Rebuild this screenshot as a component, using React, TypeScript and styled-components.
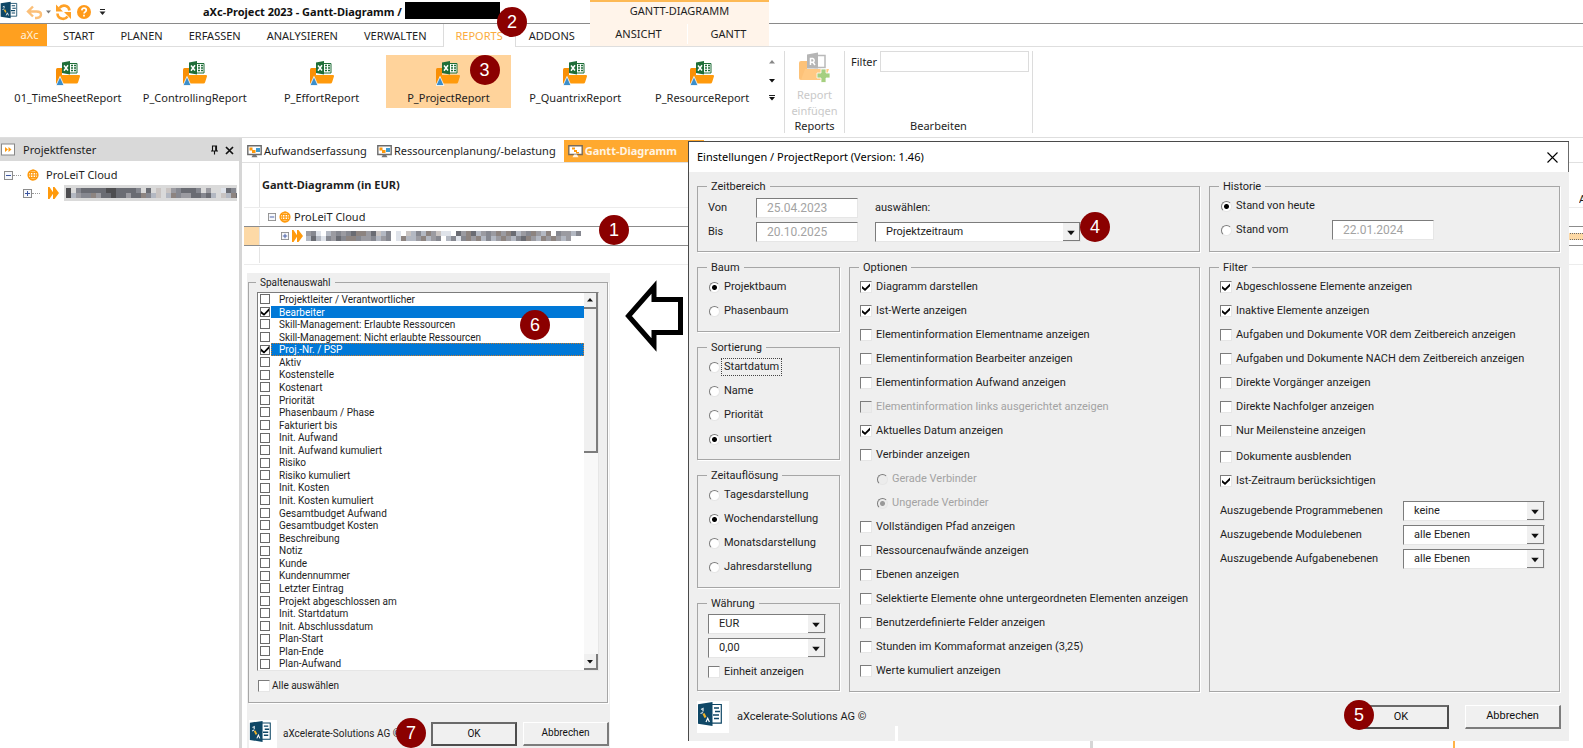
import React from "react";
import styled, { createGlobalStyle, css } from "styled-components";

const APP_FONT = `"Noto Sans", "Open Sans", sans-serif`;
const DIALOG_FONT = `Roboto, "Liberation Sans", sans-serif`;
const ORANGE = "#ff9a0c";

const GlobalStyle = createGlobalStyle`
  *, *::before, *::after { box-sizing: border-box; }
  body { margin: 0; background: #fff; color: #1e1e1e; font: 11px/16px ${APP_FONT}; overflow: hidden; }
  button, input, select { font: inherit; color: inherit; margin: 0; }
  svg { display: block; flex: none; }
`;

/* ---------- icons ---------- */

const Logo = ({ size }: { size: number }) => (
  <svg width={size} height={size} viewBox="0 0 32 32" aria-hidden="true">
    <rect width="32" height="32" fill="#fff" />
    <path d="M14 3.500h10.300v18.600H14" fill="#fff" stroke="#0f4766" strokeWidth="1.200" />
    <path d="M17 7h5M18 10.500h5M16 14h6M17 17.500h5" stroke="#0f4766" strokeWidth="1.600" />
    <path d="M1 3.200 15.500 1v24L1 22.800z" fill="#0f4766" />
    <path d="M4 8.500l2-1v3M3.500 12.500l2.500-1" stroke="#dbe5ea" strokeWidth="1.300" fill="none" />
    <path d="M6.500 12.500l2 4" stroke="#f0b429" strokeWidth="2.200" />
    <path d="M9 21l1.700-3.800 1.700 3.800" stroke="#fff" strokeWidth="1.200" fill="none" />
  </svg>
);

const ReportIcon = () => (
  <svg width="24" height="25" viewBox="0 0 24 25" aria-hidden="true">
    <path d="M0 8.500q0-1.500 1.500-1.500H6v8l-2.500 8H1.500Q0 23 0 21.500z" fill="#f98f06" />
    <path d="M13 2.500h8v9.500h-8z" fill="#fff" stroke="#1f6e38" />
    <path d="M15 4.500h2M18 4.500h2M15 7h2M18 7h2M15 9.500h2M18 9.500h2" stroke="#1f6e38" strokeWidth="1.300" />
    <path d="M6 1.500 14 0v13.500L6 12z" fill="#1f6e38" />
    <path d="M8 4.500l4 5M12 4.300l-4 5.400" stroke="#fff" strokeWidth="1.500" />
    <path d="M3 15.500q.4-1.500 2-1.500h18q1.300 0 1 1.200l-1.800 5.800q-.4 1.500-1.800 1.500H4z" fill="#ff9a0c" />
    <path d="M4 15.500l4 9H0z" fill="#3b8ecb" stroke="#fff" strokeWidth=".8" />
  </svg>
);

const InsertReportIcon = () => (
  <svg width="32" height="31" viewBox="0 0 32 31" aria-hidden="true">
    <path d="M1 11q0-2 2-2h6v9L4 28H3q-2 0-2-2z" fill="#fdc278" />
    <path d="M17 3.500h10v12H17z" fill="#fff" stroke="#b9b9b9" strokeWidth="1.500" />
    <path d="M9 2.500 20 .5v16H9z" fill="#b5b5b5" />
    <path d="M12.500 13V6.500h2.300a2 2 0 0 1 0 3.800h-2.300M15 10.500l2 2.500" stroke="#fff" strokeWidth="1.500" fill="none" />
    <path d="M7 17h24l-3 8q-1 3-3 3H3z" fill="#ffc983" />
    <path d="M23 17h5v4h4v5h-4v4.500h-5V26h-4v-5h4z" fill="#a5cf7f" stroke="#fff" strokeWidth=".8" />
  </svg>
);

const GlobeIcon = () => (
  <svg width="12" height="12" viewBox="0 0 12 12" aria-hidden="true">
    <circle cx="6" cy="6" r="4.800" fill="#fff" stroke={ORANGE} strokeWidth="1.600" />
    <path d="M6 1v10M1 6h10M2 3.500h8M2 8.500h8" stroke={ORANGE} strokeWidth="1.200" />
    <ellipse cx="6" cy="6" rx="2.800" ry="5" stroke={ORANGE} strokeWidth="1.100" fill="none" />
  </svg>
);

const ArrowsIcon = () => (
  <svg width="11" height="12" viewBox="0 0 11 12" aria-hidden="true">
    <path d="M0 0h1.500l4 6-4 6H0zM5 0h1.500L11 6l-4.500 6H5z" fill={ORANGE} />
  </svg>
);

const ExpandBox = ({ open, size = 9 }: { open?: boolean; size?: number }) => (
  <svg width={size} height={size} viewBox="0 0 9 9" aria-hidden="true">
    <rect x=".5" y=".5" width="8" height="8" fill="#f6f8fc" stroke="#8c8c8c" />
    <path d={open ? "M2 4.500h5" : "M2 4.500h5M4.500 2v5"} stroke="#3b55a0" />
  </svg>
);

const ScreenIcon = ({ blue, light }: { blue?: boolean; light?: boolean }) => (
  <svg width="15" height="14" viewBox="0 0 15 14" aria-hidden="true">
    <path d="M.8 1.800h13.400v8.700H.8z" fill="#fff" stroke={light ? "#7b6a55" : "#6b6b6b"} strokeWidth="1.400" />
    <path d="M6 10.500h3l1.500 2.800h-6z" fill={light ? "#fff3e0" : "#777"} />
    <path d={light ? "M4 3.500h3v2H4zM6 6h3v2H6zM8 8h3v1.500H8z" : "M2.500 3.500h3V6h3v3H5V6.500H2.500z"} fill={ORANGE} />
    {blue && <path d="M9 4h4v4H9z" fill="#3e9bd0" />}
  </svg>
);

const QuickIcons = () => (
  <svg width="108" height="20" viewBox="2 0 108 20" aria-hidden="true">
    <path d="M13 4.500 8 9.500l5 5M8.500 9.500h8q4.500 0 4.500 3t-4.500 3.500h-1.500" stroke="#fbbf78" strokeWidth="2.400" fill="none" />
    <path d="M26 8.500h5l-2.500 3z" fill="#777" />
    <path d="M49.500 8.500a5.500 5.500 0 0 0-10-2.500M37.500 11.500a5.500 5.500 0 0 0 10 3" stroke="#ffa126" strokeWidth="2.600" fill="none" />
    <path d="M36 2.500v7h7zM51 17v-7h-7z" fill="#ffa126" />
    <circle cx="64" cy="10" r="7" fill="#ff9a1a" />
    <path d="M61.800 8.300q.2-2.200 2.300-2.200t2.200 2q0 1.200-1.200 1.800-1 .5-1 1.600M64 12.800v1.600" stroke="#fff" strokeWidth="1.700" fill="none" />
    <path d="M80 7.500h5" stroke="#222" />
    <path d="M79.500 9.500h6l-3 3.500z" fill="#222" />
  </svg>
);

const Triangle = ({ up, bar, dim, large }: { up?: boolean; bar?: boolean; dim?: boolean; large?: boolean }) => (
  <svg width={large ? 10 : 8} height={large ? 10 : 8} viewBox="0 0 8 8" aria-hidden="true">
    {bar && <path d="M1 1.500h6" stroke="#222" />}
    <path d={up ? "M1 5.500h6L4 2z" : "M1 3h6L4 6.500z"} fill={dim ? "#888" : "#111"} />
  </svg>
);

const SHADES = ["#4d4d50", "#6a6c73", "#868890", "#9b9ba1", "#8d8480", "#b3b8c2", "#c9c4c2", "#dfe3ea"];

/* A censored name: two rows of grey blocks, one digit per block. */
const Mosaic = ({ rows }: { rows: string[] }) => (
  <svg width={rows[0].length * 5} height="10" viewBox={`0 0 ${rows[0].length * 5} 10`} aria-hidden="true">
    {rows.map((row, y) =>
      row.split("").map((c, x) =>
        c === " " ? null : <rect key={`${y}-${x}`} x={x * 5} y={y * 5} width="5" height="5" fill={SHADES[Number(c)]} />,
      ),
    )}
  </svg>
);

/* ---------- numbered markers ---------- */

const Marker = styled.span<{ $x: number; $y: number }>`
  position: absolute;
  left: ${(p) => p.$x}px;
  top: ${(p) => p.$y}px;
  z-index: 5;
  width: 30px;
  height: 30px;
  border-radius: 50%;
  background: #8b0000;
  color: #fff;
  font: 18px/30px "Liberation Sans", Arial, sans-serif;
  text-align: center;
`;

/* ---------- application frame ---------- */

const Shell = styled.div`
  position: relative;
  display: flex;
  flex-direction: column;
  min-height: 100vh;
`;

const Header = styled.header`
  display: flex;
  height: 46px;
`;

const HeadMain = styled.div`
  position: relative;
  flex: 0 0 590px;
`;

const TitleBar = styled.div`
  display: flex;
  align-items: center;
  height: 24px;
  border-bottom: 1px solid #8a8a8a;
`;

const Title = styled.h1`
  margin: 0 0 0 73px;
  font-size: 11px;
  line-height: 16px;
  color: #111;
  white-space: nowrap;
`;

const Redacted = styled.span`
  width: 95px;
  height: 17px;
  margin-left: 3px;
  margin-bottom: 2px;
  background: #000;
`;

const Tabs = styled.nav`
  display: flex;
  height: 23px;
`;

const tabLook = css`
  border: 0;
  background: none;
  padding: 0 13px;
  line-height: 20px;
  white-space: nowrap;
`;

const Tab = styled.button<{ $active?: boolean }>`
  ${tabLook}
  ${(p) =>
    p.$active &&
    css`
      margin-left: 3px;
      padding: 0 12px;
      color: #fbab3c;
      background: #fff;
      border: solid #dcdcdc;
      border-width: 0 1px;
      z-index: 1;
    `}
`;

const FileTab = styled.button`
  ${tabLook}
  width: 47px;
  height: 22px;
  margin-right: 3px;
  padding: 0 0 0 12px;
  background: #ffa01f;
  color: #fff1dc;
`;

const Context = styled.div`
  flex: 0 0 179px;
  border-top: 2px solid #fdb955;
  background: #fff4ea;
  text-align: center;
`;

const ContextTitle = styled.div`
  height: 22px;
  line-height: 18px;
`;

const ContextTabs = styled.div`
  display: grid;
  grid-template-columns: 97px 1fr;
  & > button + button { border-left: 1px solid #fff; }
`;

const HeadRest = styled.div`
  flex: 1;
  height: 24px;
  border-bottom: 1px solid #8a8a8a;
`;

const Ribbon = styled.section`
  display: flex;
  height: 92px;
  border: solid #dedede;
  border-width: 1px 0;
`;

const Gallery = styled.div`
  flex: 0 0 765px;
  display: grid;
  grid-template-columns: repeat(6, 1fr);
  column-gap: 1px;
  align-items: start;
  padding: 8px 0 0 5px;
`;

const GalleryItem = styled.button<{ $active?: boolean }>`
  position: relative;
  display: flex;
  flex-direction: column;
  align-items: center;
  gap: 4px;
  height: 53px;
  padding: 6px 0 0;
  border: 0;
  background: ${(p) => (p.$active ? "#ffd39b" : "none")};
`;

const GalleryScroll = styled.div`
  flex: 0 0 19px;
  display: flex;
  flex-direction: column;
  gap: 10px;
  padding: 11px 0 0 3px;
`;

const Group = styled.section<{ $width: number }>`
  flex: 0 0 ${(p) => p.$width}px;
  min-width: 0;
  display: flex;
  flex-direction: column;
  align-items: center;
  margin: 4px 0 4px;
  border-left: 1px solid #dcdcdc;
  &:last-child { border-right: 1px solid #dcdcdc; }
`;

const GroupLabel = styled.div`
  margin-top: auto;
  line-height: 14px;
`;

const InsertButton = styled.button`
  display: flex;
  flex-direction: column;
  align-items: center;
  height: 66px;
  padding: 0;
  border: 0;
  overflow: hidden;
  background: none;
  color: #c9c9c9;
  line-height: 16px;
  & > svg { margin: 1px 0 4px; }
`;

const FilterField = styled.label`
  display: flex;
  align-self: stretch;
  align-items: center;
  gap: 3px;
  padding: 0 3px 0 6px;
  & > input {
    flex: 1;
    min-width: 0;
    height: 21px;
    border: 1px solid #dcdcdc;
  }
`;

const Workspace = styled.div`
  flex: 1;
  display: flex;
`;

const Sidebar = styled.aside`
  flex: 0 0 239px;
  overflow: hidden;
`;

const SidebarHead = styled.div`
  display: flex;
  align-items: center;
  height: 23px;
  padding: 1px 5px 0 1px;
  background: #d9d9d9;
  & > span { flex: 1; padding-left: 7px; }
`;

const HeadIcon = styled.button`
  padding: 0;
  margin-left: 6px;
  border: 0;
  background: none;
`;

const Tree = styled.div`
  padding: 5px 2px 0 4px;
`;

const TreeRow = styled.div<{ $indent?: number }>`
  display: flex;
  align-items: center;
  height: 18px;
  padding-left: ${(p) => p.$indent ?? 0}px;
`;

const Branch = styled.span<{ $gap: number }>`
  width: 8px;
  margin-right: ${(p) => p.$gap}px;
  border-top: 1px dotted #999;
`;

const TreeLabel = styled.span`
  margin-left: 7px;
`;

const CensoredLabel = styled.span`
  flex: 1;
  margin-left: 5px;
  padding: 3px 0 3px 2px;
  overflow: hidden;
  background: #dadada;
`;

const Splitter = styled.div`
  flex: 0 0 3px;
  background: #d6d6d6;
`;

const Main = styled.main`
  flex: 1;
  display: flex;
  flex-direction: column;
  min-width: 0;
`;

const DocTabs = styled.div`
  display: flex;
  height: 25px;
  padding: 2px 0 0 5px;
  border-bottom: 1px solid #e0e0e0;
`;

const DocTab = styled.button<{ $active?: boolean }>`
  display: flex;
  align-items: center;
  gap: 2px;
  padding: 0 10px 0 0;
  border: 0;
  background: none;
  white-space: nowrap;
  ${(p) =>
    p.$active &&
    css`
      width: 140px;
      padding: 0 4px;
      margin-left: -2px;
      background: #ffa92f;
      color: #fff4e2;
      font-weight: 700;
    `}
`;

const GanttHead = styled.div`
  display: flex;
  height: 45px;
  margin-left: 2px;
  border-bottom: 1px solid #ececec;
`;

const Gutter = styled.div<{ $mark?: boolean }>`
  flex: 0 0 16px;
  border-right: 1px solid #e4e4e4;
  background: ${(p) => (p.$mark ? "#fdd9a6" : "none")};
`;

const GanttTitle = styled.h2`
  margin: 14px auto 0 2px;
  font-size: 11px;
  line-height: 16px;
`;

const ColumnHead = styled.div`
  align-self: flex-end;
  width: 4px;
  overflow: hidden;
`;

const GanttRow = styled.div<{ $selected?: boolean }>`
  display: flex;
  align-items: center;
  height: ${(p) => (p.$selected ? 20 : 18)}px;
  margin-left: 2px;
  border-bottom: 1px solid ${(p) => (p.$selected ? "#8c8c8c" : "transparent")};
  border-top: 1px solid ${(p) => (p.$selected ? "#8c8c8c" : "transparent")};
  & > ${Gutter} { align-self: stretch; }
`;

const GanttCell = styled.div<{ $indent: number }>`
  flex: 1;
  display: flex;
  align-items: center;
  gap: 3px;
  padding-left: ${(p) => p.$indent}px;
`;

const GanttBar = styled.div`
  width: 16px;
  height: 7px;
  border: dotted #6b6b6b;
  border-width: 1px 0;
  background: #fdd9a6;
`;

const GanttRule = styled.div`
  height: 1px;
  margin-left: 2px;
  background: #ececec;
`;

const GanttFoot = styled.div`
  display: grid;
  grid-template-columns: 848px 3px 360px 2px;
  height: 7px;
  margin-top: auto;
  & > :nth-child(2) { background: #d6d6d6; }
  & > :nth-child(4) { background: #ffb347; }
`;

/* ---------- classic form controls ---------- */

const Fieldset = styled.fieldset<{ $foot?: number }>`
  min-width: 0;
  margin: 0;
  padding: 0 10px ${(p) => p.$foot ?? 8}px;
  border: 1px solid #a6a6a6;
  box-shadow: 1px 1px 0 #fff;
`;

const Legend = styled.legend`
  height: 16px;
  margin-left: -1px;
  padding: 0 4px;
  line-height: 18px;
`;

const sunken = css`
  border: 1px solid;
  border-color: #7c7c7c #e6e6e6 #e6e6e6 #7c7c7c;
`;

const Check = styled.input.attrs({ type: "checkbox" })`
  appearance: none;
  flex: none;
  position: relative;
  width: 12px;
  height: 12px;
  background: #fff;
  ${sunken}
  &:disabled { background: #ececec; }
  &:checked::after {
    content: "";
    position: absolute;
    inset: 1px;
    background: #000;
    clip-path: polygon(0 38%, 38% 70%, 100% 5%, 100% 40%, 38% 100%, 0 70%);
  }
`;

const Radio = styled.input.attrs({ type: "radio" })`
  appearance: none;
  flex: none;
  width: 11px;
  height: 11px;
  border-radius: 50%;
  background: #fff;
  ${sunken}
  &:checked { background: radial-gradient(circle, #000 0 2px, #fff 3px); }
  &:disabled { background: #ececec; }
  &:disabled:checked { background: radial-gradient(circle, #999 0 2px, #ececec 3px); }
`;

const Option = styled.label<{ $disabled?: boolean; $indent?: boolean; $gapTop?: boolean }>`
  display: flex;
  align-items: center;
  gap: 4px;
  height: 24px;
  margin-top: ${(p) => (p.$gapTop ? 2 : 0)}px;
  padding-left: ${(p) => (p.$indent ? 16 : 0)}px;
  color: ${(p) => (p.$disabled ? "#a3a3a3" : "inherit")};
  white-space: nowrap;
  & > ${Radio} { margin-left: 1px; }
`;

const Focused = styled.span`
  margin-left: -2px;
  padding: 0 2px;
  outline: 1px dotted #444;
`;

const SelectBox = styled.span`
  position: relative;
  display: flex;
  height: 20px;
  background: #fff;
  ${sunken}
  & > select {
    appearance: none;
    flex: 1;
    min-width: 0;
    padding: 0 20px 0 10px;
    border: 0;
    background: none;
  }
`;

const DropArrow = styled.span`
  position: absolute;
  top: 0;
  right: 0;
  bottom: 0;
  display: flex;
  align-items: center;
  justify-content: center;
  width: 17px;
  border: solid #7c7c7c;
  border-width: 0 1px 1px 0;
  background: #f0f0f0;
  pointer-events: none;
`;

const Select = ({ label, value }: { label: string; value: string }) => (
  <SelectBox>
    <select aria-label={label} defaultValue={value}>
      <option>{value}</option>
    </select>
    <DropArrow><Triangle large /></DropArrow>
  </SelectBox>
);

const DateInput = styled.input`
  width: 102px;
  height: 20px;
  padding: 0 0 0 10px;
  background: #fff;
  color: #a3a3a3;
  font-size: 12px;
  ${sunken}
  &:disabled { background: #fff; }
`;

const PushButton = styled.button<{ $primary?: boolean; $small?: boolean }>`
  width: ${(p) => (p.$small ? 86 : 96)}px;
  height: 24px;
  padding: 0;
  border: solid;
  border-width: ${(p) => (p.$primary ? "2px" : "1px 2px 2px 1px")};
  border-color: ${(p) => (p.$primary ? "#6a6a6a #4d4d4d #4d4d4d #6a6a6a" : "#fff #7c7c7c #7c7c7c #fff")};
  background: #f0f0f0;
  color: #111;
`;

/* ---------- settings dialog ---------- */

const Dialog = styled.section`
  position: absolute;
  top: 141px;
  left: 688px;
  right: 14px;
  border: solid #4a4a4a;
  border-width: 1px 0 0 1px;
  background: #efefef;
  font-family: ${DIALOG_FONT};
`;

const DialogTitle = styled.div`
  display: flex;
  align-items: center;
  justify-content: space-between;
  height: 30px;
  padding: 0 10px 0 8px;
  border-right: 1px solid #6b6b6b;
  background: #fff;
  color: #000;
  font-family: ${APP_FONT};
`;

const CloseButton = styled.button`
  padding: 0;
  border: 0;
  background: none;
`;

const DialogGrid = styled.div`
  display: grid;
  grid-template-columns: 143px 1fr 1fr;
  gap: 7px 9px;
  padding: 6px 9px 0 8px;
`;

const RangeFieldset = styled(Fieldset)`
  grid-column: span 2;
`;

const RangeGrid = styled.div`
  display: grid;
  grid-template-columns: 48px 102px 206px;
  grid-auto-rows: 24px;
  align-items: center;
  padding-top: 2px;
`;

const RangeText = styled.span`
  padding-left: 17px;
`;

const RangePick = styled.div`
  position: relative;
  width: 206px;
  margin-left: 17px;
`;

const Column = styled.div`
  display: flex;
  flex-direction: column;
  gap: 7px;
`;

const CurrencyBox = styled.div`
  display: grid;
  gap: 4px;
  width: 118px;
  padding: 3px 0 2px;
`;

const HistoryRow = styled.div`
  display: grid;
  grid-template-columns: 112px 102px;
  align-items: center;
`;

const Levels = styled.div`
  display: grid;
  grid-template-columns: 1fr 142px;
  grid-auto-rows: 24px;
  align-items: center;
  padding: 6px 4px 0 0;
`;

const Footer = styled.div<{ $small?: boolean }>`
  position: relative;
  display: flex;
  align-items: center;
  height: ${(p) => (p.$small ? 45 : 49)}px;
  margin-right: ${(p) => (p.$small ? -2 : 0)}px;
  padding: ${(p) => (p.$small ? "16px 1px 0 1px" : "0 8px")};
  gap: ${(p) => (p.$small ? 6 : 8)}px;
  & > p { margin: 0 auto 0 0; white-space: nowrap; }
`;

const ButtonRow = styled.div<{ $gap: number }>`
  display: flex;
  gap: ${(p) => p.$gap}px;
`;

const ButtonSlot = styled.div`
  position: relative;
  display: flex;
`;

const FooterGap = styled.span`
  position: absolute;
  left: 206px;
  bottom: 0;
  width: 3px;
  height: 15px;
  background: #fff;
`;

/* ---------- column picker ---------- */

const Picker = styled.section`
  position: absolute;
  top: 273px;
  left: 247px;
  width: 363px;
  padding: 1px 2px 0 1px;
  background: #efefef;
  font: 10px/16px ${DIALOG_FONT};
`;

const ListBox = styled.div`
  display: flex;
  height: 379px;
  margin-top: 2px;
  background: #fff;
  ${sunken}
`;

const ListRows = styled.div`
  flex: 1;
  display: grid;
  grid-template-rows: repeat(30, 1fr);
`;

const ListRow = styled.label`
  display: flex;
  align-items: center;
  gap: 1px;
  min-height: 0;
  padding-left: 2px;
`;

const ListCheck = styled(Check)`
  width: 10px;
  height: 10px;
  border: 1px solid #6a6a6a;
  &:checked::after { inset: 0; }
`;

const ListText = styled.span<{ $on?: boolean; $focus?: boolean }>`
  flex: 1;
  align-self: stretch;
  padding-left: 8px;
  line-height: 14px;
  ${(p) => p.$on && css`background: #0078d7; color: #fff;`}
  ${(p) => p.$focus && css`outline: 1px dotted #c87a2a; outline-offset: -1px;`}
`;

const ScrollBar = styled.div`
  flex: 0 0 14px;
  display: flex;
  flex-direction: column;
  background: #f8f8f8;
`;

const ScrollPiece = styled.div<{ $size: number }>`
  display: flex;
  align-items: center;
  justify-content: center;
  height: ${(p) => p.$size}px;
  border: solid #7c7c7c;
  border-width: 0 2px 2px 0;
  background: #f0f0f0;
  &:last-child { margin-top: auto; }
`;

const AllRow = styled.label`
  display: flex;
  align-items: center;
  gap: 2px;
  height: 14px;
  margin-top: 8px;
  padding-left: 1px;
`;

const PickerFieldset = styled(Fieldset)`
  padding: 0 8px 9px;
`;

const BigArrow = styled.svg`
  position: absolute;
  top: 279px;
  left: 624px;
`;

/* ---------- data ---------- */

const REPORTS = ["01_TimeSheetReport", "P_ControllingReport", "P_EffortReport", "P_ProjectReport", "P_QuantrixReport", "P_ResourceReport"];

const COLUMNS = [
  "Projektleiter / Verantwortlicher", "Bearbeiter", "Skill-Management: Erlaubte Ressourcen",
  "Skill-Management: Nicht erlaubte Ressourcen", "Proj.-Nr. / PSP", "Aktiv", "Kostenstelle", "Kostenart",
  "Priorität", "Phasenbaum / Phase", "Fakturiert bis", "Init. Aufwand", "Init. Aufwand kumuliert", "Risiko",
  "Risiko kumuliert", "Init. Kosten", "Init. Kosten kumuliert", "Gesamtbudget Aufwand", "Gesamtbudget Kosten",
  "Beschreibung", "Notiz", "Kunde", "Kundennummer", "Letzter Eintrag", "Projekt abgeschlossen am",
  "Init. Startdatum", "Init. Abschlussdatum", "Plan-Start", "Plan-Ende", "Plan-Aufwand",
];

const DISPLAY_TOP: [string, boolean?, boolean?][] = [
  ["Diagramm darstellen", true], ["Ist-Werte anzeigen", true], ["Elementinformation Elementname anzeigen"],
  ["Elementinformation Bearbeiter anzeigen"], ["Elementinformation Aufwand anzeigen"],
  ["Elementinformation links ausgerichtet anzeigen", false, true], ["Aktuelles Datum anzeigen", true],
  ["Verbinder anzeigen"],
];

const DISPLAY_BOTTOM: [string, boolean?, boolean?][] = [
  ["Vollständigen Pfad anzeigen"], ["Ressourcenaufwände anzeigen"], ["Ebenen anzeigen"],
  ["Selektierte Elemente ohne untergeordneten Elementen anzeigen"], ["Benutzerdefinierte Felder anzeigen"],
  ["Stunden im Kommaformat anzeigen (3,25)"], ["Werte kumuliert anzeigen"],
];

const FILTERS: [string, boolean?][] = [
  ["Abgeschlossene Elemente anzeigen", true], ["Inaktive Elemente anzeigen", true],
  ["Aufgaben und Dokumente VOR dem Zeitbereich anzeigen"], ["Aufgaben und Dokumente NACH dem Zeitbereich anzeigen"],
  ["Direkte Vorgänger anzeigen"], ["Direkte Nachfolger anzeigen"], ["Nur Meilensteine anzeigen"],
  ["Dokumente ausblenden"], ["Ist-Zeitraum berücksichtigen", true],
];

const LEVELS = [
  ["Auszugebende Programmebenen", "keine"],
  ["Auszugebende Modulebenen", "alle Ebenen"],
  ["Auszugebende Aufgabenebenen", "alle Ebenen"],
];

const CheckList = ({ items }: { items: [string, boolean?, boolean?][] }) => (
  <>
    {items.map(([text, on, off]) => (
      <Option key={text} $disabled={off}>
        <Check defaultChecked={on} disabled={off} />
        {text}
      </Option>
    ))}
  </>
);

const RadioGroup = ({ title, items, value, focused }: { title: string; items: string[]; value: string; focused?: string }) => (
  <Fieldset>
    <Legend>{title}</Legend>
    {items.map((item) => (
      <Option key={item}>
        <Radio name={title} defaultChecked={item === value} />
        {item === focused ? <Focused>{item}</Focused> : item}
      </Option>
    ))}
  </Fieldset>
);

const SettingsDialog = () => (
  <Dialog role="dialog" aria-label="Einstellungen">
    <DialogTitle>
      Einstellungen / ProjectReport (Version: 1.46)
      <CloseButton aria-label="Schließen">
        <svg width="11" height="11" viewBox="0 0 11 11"><path d="M.5.5l10 10M10.500.5l-10 10" stroke="#000" strokeWidth="1.100" /></svg>
      </CloseButton>
    </DialogTitle>
    <DialogGrid>
      <RangeFieldset $foot={7}>
        <Legend>Zeitbereich</Legend>
        <RangeGrid>
          <label htmlFor="von">Von</label>
          <DateInput id="von" defaultValue="25.04.2023" disabled />
          <RangeText>auswählen:</RangeText>
          <label htmlFor="bis">Bis</label>
          <DateInput id="bis" defaultValue="20.10.2025" disabled />
          <RangePick>
            <Select label="auswählen" value="Projektzeitraum" />
            <Marker $x={205} $y={-10}>4</Marker>
          </RangePick>
        </RangeGrid>
      </RangeFieldset>
      <Fieldset>
        <Legend>Historie</Legend>
        <Option><Radio name="historie" defaultChecked />Stand von heute</Option>
        <HistoryRow>
          <Option><Radio name="historie" />Stand vom</Option>
          <DateInput aria-label="Stand vom" defaultValue="22.01.2024" disabled />
        </HistoryRow>
      </Fieldset>
      <Column>
        <RadioGroup title="Baum" items={["Projektbaum", "Phasenbaum"]} value="Projektbaum" />
        <RadioGroup title="Sortierung" items={["Startdatum", "Name", "Priorität", "unsortiert"]} value="unsortiert" focused="Startdatum" />
        <RadioGroup title="Zeitauflösung" items={["Tagesdarstellung", "Wochendarstellung", "Monatsdarstellung", "Jahresdarstellung"]} value="Wochendarstellung" />
        <Fieldset $foot={6}>
          <Legend>Währung</Legend>
          <CurrencyBox>
            <Select label="Währung" value="EUR" />
            <Select label="Zahlenformat" value="0,00" />
          </CurrencyBox>
          <Option><Check />Einheit anzeigen</Option>
        </Fieldset>
      </Column>
      <Fieldset>
        <Legend>Optionen</Legend>
        <CheckList items={DISPLAY_TOP} />
        <Option $indent $disabled><Radio name="verbinder" disabled />Gerade Verbinder</Option>
        <Option $indent $disabled><Radio name="verbinder" disabled defaultChecked />Ungerade Verbinder</Option>
        <CheckList items={DISPLAY_BOTTOM} />
      </Fieldset>
      <Fieldset>
        <Legend>Filter</Legend>
        {FILTERS.map(([text, on], i) => (
          <Option key={text} $gapTop={i === 7}><Check defaultChecked={on} />{text}</Option>
        ))}
        <Levels>
          {LEVELS.map(([label, value]) => (
            <React.Fragment key={label}>
              <span>{label}</span>
              <Select label={label} value={value} />
            </React.Fragment>
          ))}
        </Levels>
      </Fieldset>
    </DialogGrid>
    <Footer>
      <Logo size={32} />
      <p>aXcelerate-Solutions AG ©</p>
      <ButtonRow $gap={16}>
        <ButtonSlot>
          <PushButton $primary>OK</PushButton>
          <Marker $x={-9} $y={-5}>5</Marker>
        </ButtonSlot>
        <PushButton>Abbrechen</PushButton>
      </ButtonRow>
      <FooterGap />
    </Footer>
  </Dialog>
);

const ColumnPicker = () => (
  <Picker role="dialog" aria-label="Spaltenauswahl">
    <PickerFieldset>
      <Legend>Spaltenauswahl</Legend>
      <ListBox>
        <ListRows>
          {COLUMNS.map((name, i) => {
            const on = i === 1 || i === 4;
            return (
              <ListRow key={name}>
                <ListCheck defaultChecked={on} />
                <ListText $on={on} $focus={i === 4}>{name}</ListText>
              </ListRow>
            );
          })}
        </ListRows>
        <ScrollBar>
          <ScrollPiece $size={16}><Triangle up /></ScrollPiece>
          <ScrollPiece $size={144} />
          <ScrollPiece $size={16}><Triangle /></ScrollPiece>
        </ScrollBar>
      </ListBox>
      <AllRow><Check />Alle auswählen</AllRow>
    </PickerFieldset>
    <Footer $small>
      <Logo size={28} />
      <p>aXcelerate-Solutions AG ©</p>
      <ButtonRow $gap={6}>
        <ButtonSlot>
          <PushButton $primary $small>OK</PushButton>
          <Marker $x={-35} $y={-4}>7</Marker>
        </ButtonSlot>
        <PushButton $small>Abbrechen</PushButton>
      </ButtonRow>
    </Footer>
    <Marker $x={273} $y={37}>6</Marker>
  </Picker>
);

export default function App() {
  return (
    <Shell>
      <GlobalStyle />
      <Header>
        <HeadMain>
          <TitleBar>
            <Logo size={22} />
            <QuickIcons />
            <Title>aXc-Project 2023 - Gantt-Diagramm /</Title>
            <Redacted />
          </TitleBar>
          <Tabs>
            <FileTab>aXc</FileTab>
            {["START", "PLANEN", "ERFASSEN", "ANALYSIEREN", "VERWALTEN"].map((t) => <Tab key={t}>{t}</Tab>)}
            <Tab $active>REPORTS</Tab>
            <Tab>ADDONS</Tab>
          </Tabs>
          <Marker $x={497} $y={7}>2</Marker>
        </HeadMain>
        <Context>
          <ContextTitle>GANTT-DIAGRAMM</ContextTitle>
          <ContextTabs><Tab>ANSICHT</Tab><Tab>GANTT</Tab></ContextTabs>
        </Context>
        <HeadRest />
      </Header>

      <Ribbon>
        <Gallery>
          {REPORTS.map((name) => (
            <GalleryItem key={name} $active={name === "P_ProjectReport"}>
              <ReportIcon />
              {name}
              {name === "P_ProjectReport" && <Marker $x={84} $y={0}>3</Marker>}
            </GalleryItem>
          ))}
        </Gallery>
        <GalleryScroll><Triangle up dim /><Triangle /><Triangle bar /></GalleryScroll>
        <Group $width={60}>
          <InsertButton disabled>
            <InsertReportIcon />
            <span>Report</span>
            <span>einfügen</span>
          </InsertButton>
          <GroupLabel>Reports</GroupLabel>
        </Group>
        <Group $width={189}>
          <FilterField>Filter<input type="text" /></FilterField>
          <GroupLabel>Bearbeiten</GroupLabel>
        </Group>
      </Ribbon>

      <Workspace>
        <Sidebar>
          <SidebarHead>
            <svg width="15" height="14" viewBox="0 0 15 14" aria-hidden="true">
              <rect x=".5" y="1" width="13" height="11" fill="#fff" stroke="#888" />
              <path d="M4 4l3 2.500L4 9zM7.500 4l3 2.500-3 2.500z" fill={ORANGE} />
            </svg>
            <span>Projektfenster</span>
            <HeadIcon aria-label="Anheften">
              <svg width="9" height="10" viewBox="0 0 9 10"><path d="M2.500 1h4v5h-4zM1 6h7M4.500 6v3.500M5.700 1v5" stroke="#111" strokeWidth="1.100" fill="none" /></svg>
            </HeadIcon>
            <HeadIcon aria-label="Schließen">
              <svg width="9" height="9" viewBox="0 0 9 9"><path d="M1 1l7 7M8 1L1 8" stroke="#111" strokeWidth="1.700" /></svg>
            </HeadIcon>
          </SidebarHead>
          <Tree>
            <TreeRow><ExpandBox open /><Branch $gap={6} /><GlobeIcon /><TreeLabel>ProLeiT Cloud</TreeLabel></TreeRow>
            <TreeRow $indent={19}>
              <ExpandBox /><Branch $gap={8} /><ArrowsIcon />
              <CensoredLabel>
                <Mosaic rows={["0 2111110011112 1 6 6321112 3  712 ", "0532243110113114256 5423311215 6541"]} />
              </CensoredLabel>
            </TreeRow>
          </Tree>
        </Sidebar>
        <Splitter />
        <Main>
          <DocTabs>
            <DocTab><ScreenIcon blue />Aufwandserfassung</DocTab>
            <DocTab><ScreenIcon blue />Ressourcenplanung/-belastung</DocTab>
            <DocTab $active><ScreenIcon light />Gantt-Diagramm</DocTab>
          </DocTabs>
          <GanttHead>
            <Gutter />
            <GanttTitle>Gantt-Diagramm (in EUR)</GanttTitle>
            <ColumnHead>A</ColumnHead>
          </GanttHead>
          <GanttRow>
            <Gutter />
            <GanttCell $indent={8}><ExpandBox open size={8} /><GlobeIcon />ProLeiT Cloud</GanttCell>
          </GanttRow>
          <GanttRow $selected>
            <Gutter $mark />
            <GanttCell $indent={21}>
              <ExpandBox size={8} /><ArrowsIcon />
              <Mosaic rows={["327 5323214431652 7 652543677 1341532343415324354 23352 ", "51572312442332532 745534532 5272434525343521435434353"]} />
            </GanttCell>
            <GanttBar />
          </GanttRow>
          <GanttRow><Gutter /></GanttRow>
          <GanttRule />
          <GanttFoot><i /><i /><i /><i /></GanttFoot>
        </Main>
      </Workspace>

      <Marker $x={599} $y={215}>1</Marker>
      <BigArrow width="62" height="74" viewBox="0 0 62 74" aria-hidden="true">
        <path d="M4.500 37 30 8v12.500h26.500V53.500H30V66z" fill="#fff" stroke="#000" strokeWidth="5" />
      </BigArrow>
      <ColumnPicker />
      <SettingsDialog />
    </Shell>
  );
}
